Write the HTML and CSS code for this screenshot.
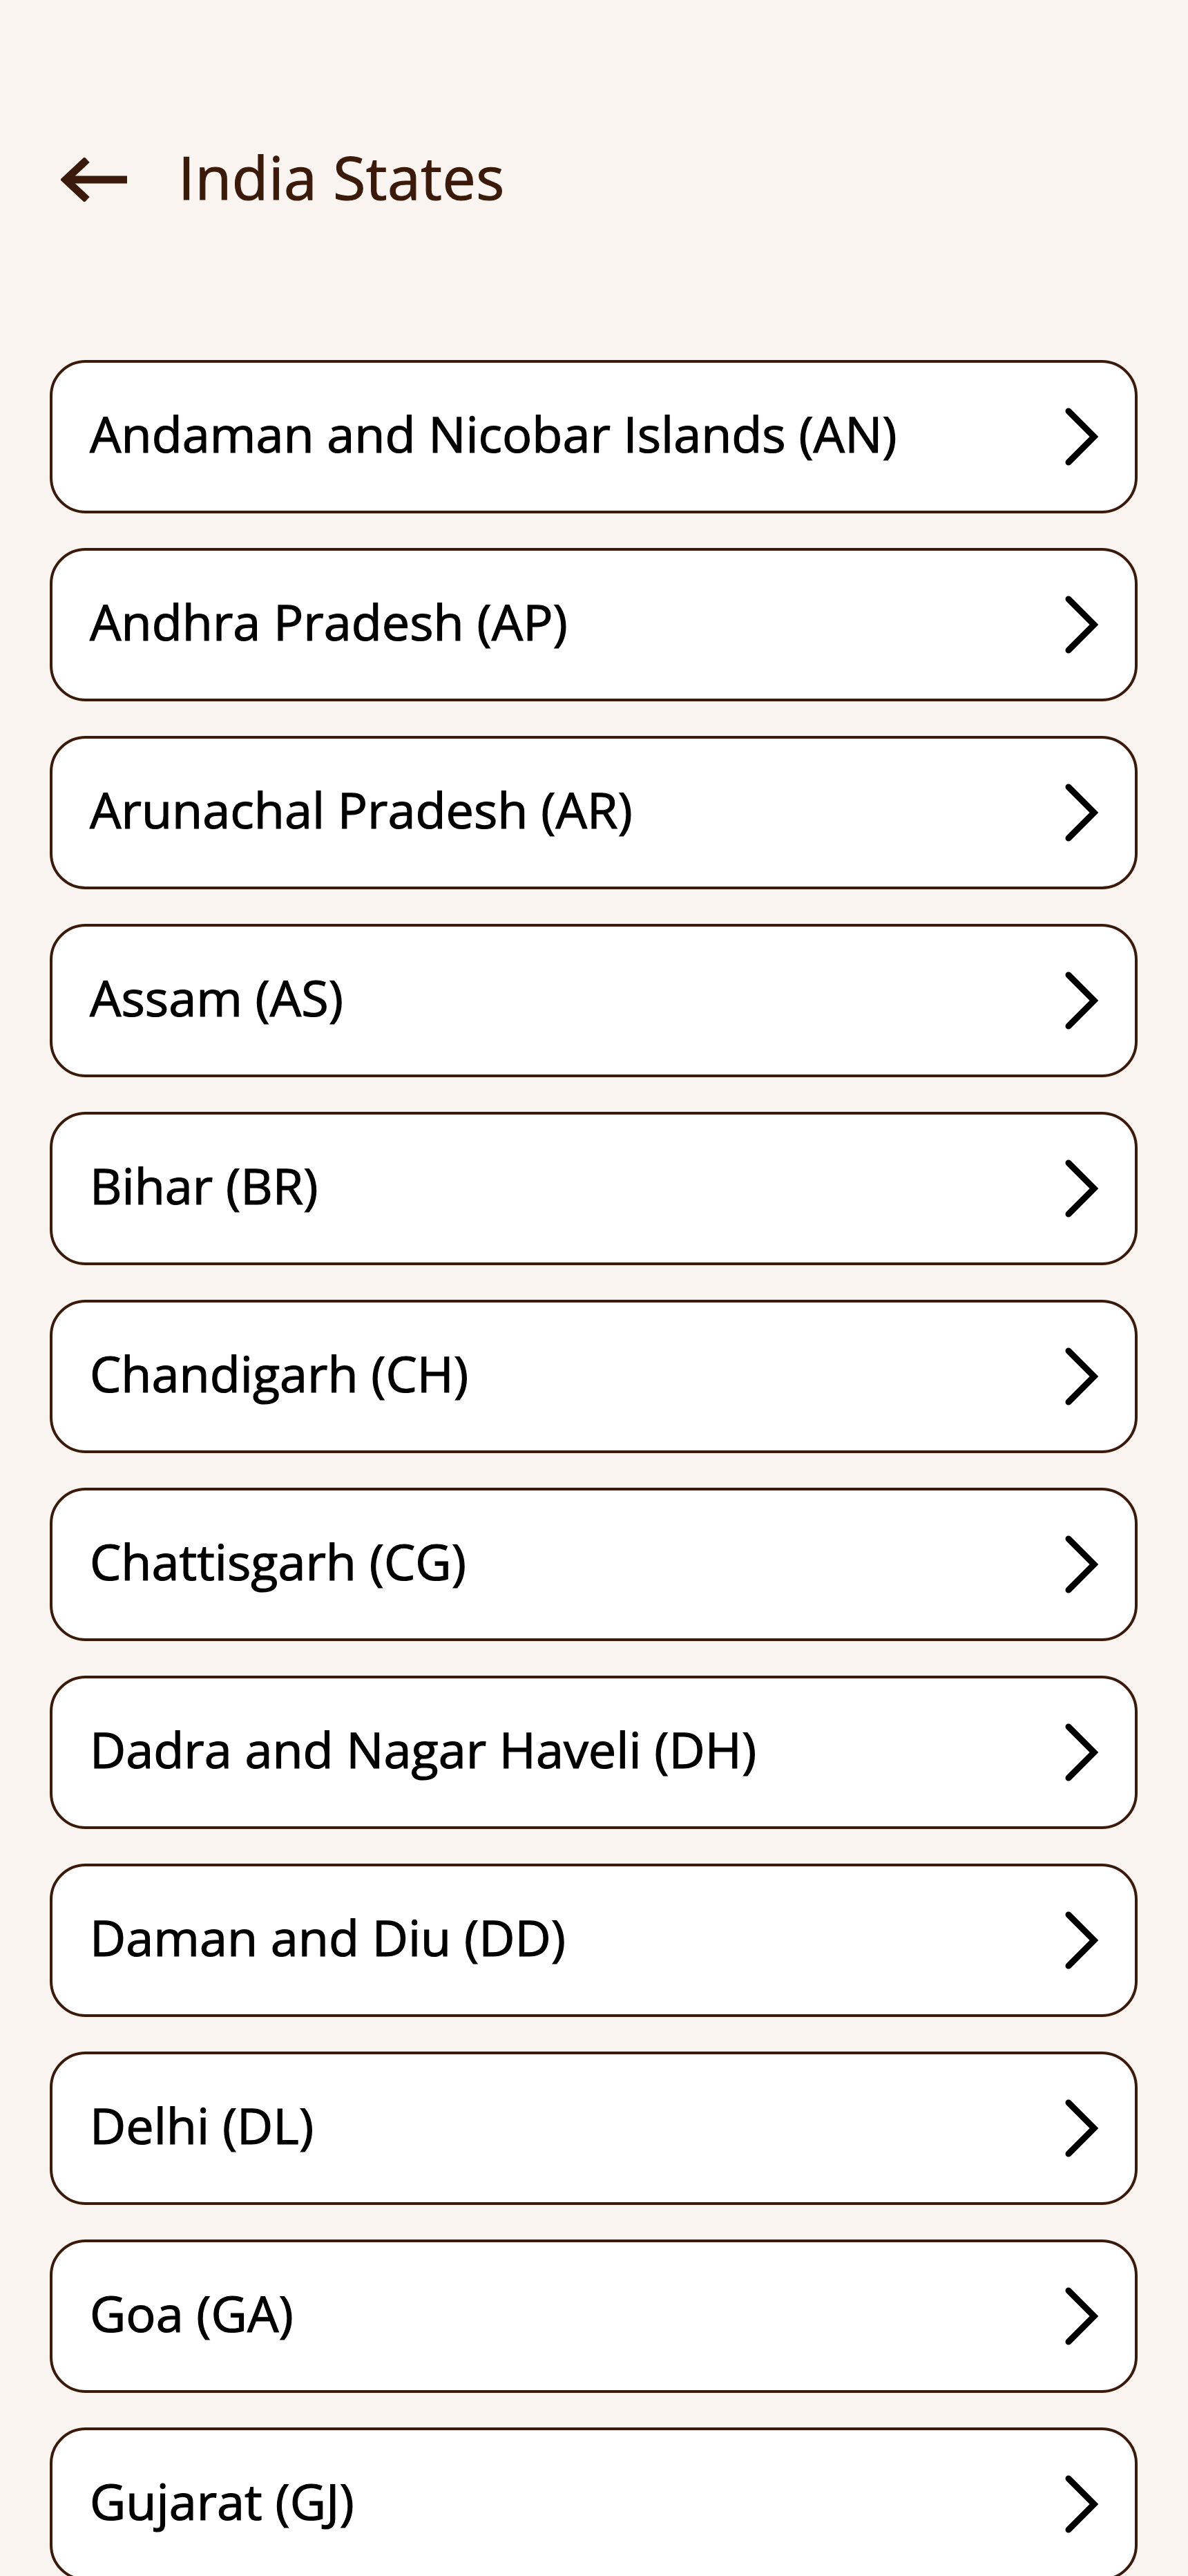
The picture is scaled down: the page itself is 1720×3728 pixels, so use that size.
FILE: index.html
```html
<!DOCTYPE html>
<html lang="en">
<head>
<meta charset="utf-8">
<title>India States</title>
<link rel="stylesheet" href="styles.css">
</head>
<body>
<div class="page">
  <header class="topbar">
    <button class="back" aria-label="Back">
      <svg width="96" height="64" viewBox="0 0 96 64" aria-hidden="true">
        <path d="M96 32H8" stroke="#3b1a0a" stroke-width="11" fill="none"/>
        <path d="M38 3L7 32L38 61" stroke="#3b1a0a" stroke-width="11" fill="none" stroke-linejoin="miter"/>
      </svg>
    </button>
    <h1 class="title">India States</h1>
  </header>
  <ul class="list">
    <li class="item"><span class="name">Andaman and Nicobar Islands (AN)</span><svg class="chev" width="50" height="84" viewBox="0 0 50 84"><polyline points="5,5 42,42 5,79" fill="none" stroke="#000" stroke-width="9" stroke-linecap="round" stroke-linejoin="miter"/></svg></li>
    <li class="item"><span class="name">Andhra Pradesh (AP)</span><svg class="chev" width="50" height="84" viewBox="0 0 50 84"><polyline points="5,5 42,42 5,79" fill="none" stroke="#000" stroke-width="9" stroke-linecap="round" stroke-linejoin="miter"/></svg></li>
    <li class="item"><span class="name">Arunachal Pradesh (AR)</span><svg class="chev" width="50" height="84" viewBox="0 0 50 84"><polyline points="5,5 42,42 5,79" fill="none" stroke="#000" stroke-width="9" stroke-linecap="round" stroke-linejoin="miter"/></svg></li>
    <li class="item"><span class="name">Assam (AS)</span><svg class="chev" width="50" height="84" viewBox="0 0 50 84"><polyline points="5,5 42,42 5,79" fill="none" stroke="#000" stroke-width="9" stroke-linecap="round" stroke-linejoin="miter"/></svg></li>
    <li class="item"><span class="name">Bihar (BR)</span><svg class="chev" width="50" height="84" viewBox="0 0 50 84"><polyline points="5,5 42,42 5,79" fill="none" stroke="#000" stroke-width="9" stroke-linecap="round" stroke-linejoin="miter"/></svg></li>
    <li class="item"><span class="name">Chandigarh (CH)</span><svg class="chev" width="50" height="84" viewBox="0 0 50 84"><polyline points="5,5 42,42 5,79" fill="none" stroke="#000" stroke-width="9" stroke-linecap="round" stroke-linejoin="miter"/></svg></li>
    <li class="item"><span class="name">Chattisgarh (CG)</span><svg class="chev" width="50" height="84" viewBox="0 0 50 84"><polyline points="5,5 42,42 5,79" fill="none" stroke="#000" stroke-width="9" stroke-linecap="round" stroke-linejoin="miter"/></svg></li>
    <li class="item"><span class="name">Dadra and Nagar Haveli (DH)</span><svg class="chev" width="50" height="84" viewBox="0 0 50 84"><polyline points="5,5 42,42 5,79" fill="none" stroke="#000" stroke-width="9" stroke-linecap="round" stroke-linejoin="miter"/></svg></li>
    <li class="item"><span class="name">Daman and Diu (DD)</span><svg class="chev" width="50" height="84" viewBox="0 0 50 84"><polyline points="5,5 42,42 5,79" fill="none" stroke="#000" stroke-width="9" stroke-linecap="round" stroke-linejoin="miter"/></svg></li>
    <li class="item"><span class="name">Delhi (DL)</span><svg class="chev" width="50" height="84" viewBox="0 0 50 84"><polyline points="5,5 42,42 5,79" fill="none" stroke="#000" stroke-width="9" stroke-linecap="round" stroke-linejoin="miter"/></svg></li>
    <li class="item"><span class="name">Goa (GA)</span><svg class="chev" width="50" height="84" viewBox="0 0 50 84"><polyline points="5,5 42,42 5,79" fill="none" stroke="#000" stroke-width="9" stroke-linecap="round" stroke-linejoin="miter"/></svg></li>
    <li class="item"><span class="name">Gujarat (GJ)</span><svg class="chev" width="50" height="84" viewBox="0 0 50 84"><polyline points="5,5 42,42 5,79" fill="none" stroke="#000" stroke-width="9" stroke-linecap="round" stroke-linejoin="miter"/></svg></li>
    <li class="item"><span class="name">Haryana (HR)</span><svg class="chev" width="50" height="84" viewBox="0 0 50 84"><polyline points="5,5 42,42 5,79" fill="none" stroke="#000" stroke-width="9" stroke-linecap="round" stroke-linejoin="miter"/></svg></li>
  </ul>
</div>
</body>
</html>
```

FILE: styles.css
```css
html, body {
  margin: 0;
  padding: 0;
  background: #f9f4f0;
}

.page {
  padding: 200px 73px 0 72px;
  font-family: "Open Sans", "Noto Sans", sans-serif;
}

.topbar {
  display: flex;
  align-items: center;
  height: 120px;
  padding-left: 16px;
}

.back {
  display: flex;
  border: 0;
  padding: 0;
  background: none;
  width: 96px;
  height: 64px;
}

.title {
  margin: 0 0 10px 74px;
  font-size: 86px;
  font-weight: 400;
  color: #3b1a0a;
  -webkit-text-stroke: 1.2px #3b1a0a;
  letter-spacing: 0.5px;
  line-height: 117px;
}

.list {
  list-style: none;
  margin: 201px 0 0;
  padding: 0;
  display: flex;
  flex-direction: column;
  gap: 50px;
}

.item {
  box-sizing: border-box;
  height: 222px;
  border: 4px solid #3b1a0a;
  border-radius: 52px;
  background: #ffffff;
  display: flex;
  align-items: center;
  justify-content: space-between;
  padding: 0 51px 0 54px;
}

.name {
  font-size: 72px;
  font-weight: 400;
  color: #000000;
  -webkit-text-stroke: 1.2px #000000;
  line-height: 1;
  margin-bottom: 10px;
}

.chev {
  flex: none;
}
```
